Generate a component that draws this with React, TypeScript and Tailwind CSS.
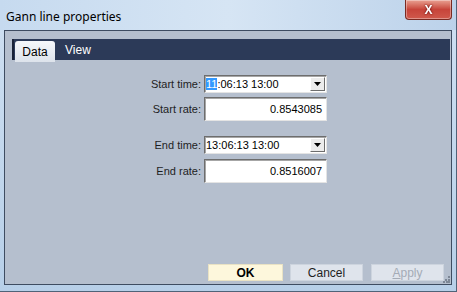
import React from 'react';

const sunken =
  'border border-t-[#6d6d6d] border-l-[#6d6d6d] border-b-[#e4e4e4] border-r-[#e4e4e4] shadow-[inset_1px_1px_0_#a6a6a6]';

const ComboBox: React.FC<{ value: string; highlight?: boolean }> = ({ value, highlight }) => (
  <div className={`h-[18px] w-[123px] bg-white flex items-center ${sunken}`}>
    <div className="flex-1 pl-[1px] text-[11px] leading-[13px] text-black">
      {highlight ? (
        <>
          <span className="bg-[#3399ff] text-white">11</span>
          <span>{value.slice(2)}</span>
        </>
      ) : (
        value
      )}
    </div>
    <div className="w-[15px] h-[14px] mr-[1px] bg-[#ececec] border border-t-white border-l-white border-b-[#6d6d6d] border-r-[#6d6d6d] flex items-center justify-center">
      <svg width="7" height="4" viewBox="0 0 7 4">
        <path d="M0 0h7L3.5 4z" fill="#000" />
      </svg>
    </div>
  </div>
);

const TextBox: React.FC<{ value: string }> = ({ value }) => (
  <div className={`h-[24px] w-[123px] bg-white flex items-center justify-end pr-[4px] text-[11px] text-black ${sunken}`}>
    {value}
  </div>
);

const Row: React.FC<{ label: string; children: React.ReactNode }> = ({ label, children }) => (
  <div className="flex items-center">
    <span className="w-[60px] pr-[3px] text-right text-[11px] text-[#1e1e1e]">{label}</span>
    {children}
  </div>
);

const App: React.FC = () => {
  return (
    <div className="w-[457px] h-[292px] overflow-hidden bg-gradient-to-b from-[#cfe0f2] to-[#b7cfe8] border-r border-b border-[#4f6378] flex flex-col font-['Liberation_Sans',Arial,sans-serif]">
      {/* Title bar */}
      <div className="h-[30px] flex items-start justify-between bg-gradient-to-r from-[#c6daef] via-[#d6e5f4] to-[#bcd2ea]">
        <span className="mt-[8px] ml-[6px] text-[12px] text-black font-['Noto_Sans',sans-serif]">Gann line properties</span>
        <div className="mr-[4px] w-[47px] h-[20px] rounded-b-[4px] border border-t-0 border-[#7a2a22] bg-gradient-to-b from-[#e8a092] via-[#c7443a] to-[#d0594c] flex items-center justify-center shadow-[inset_0_0_0_1px_rgba(255,255,255,0.35)]">
          <span className="text-white font-bold text-[12px] leading-none font-['Liberation_Sans',sans-serif] drop-shadow-[0_0_1px_#5a0000]">X</span>
        </div>
      </div>

      {/* Client area */}
      <div className="mx-[4px] h-[255px] border border-[#3e4c61] bg-[#b5bfce] flex flex-col">
        {/* Tabs */}
        <div className="mt-[8px] ml-[7px] mr-[1px] h-[21px] bg-[#2c3a58] border-l-2 border-[#1a2338] flex items-end">
          <div className="ml-[1px] w-[40px] h-[21px] -mb-[2px] rounded-t-[3px] bg-gradient-to-b from-[#f6f8fb] to-[#dde3eb] flex items-center justify-center text-[12px] text-black">
            Data
          </div>
          <div className="ml-[10px] self-center text-[12px] text-white">View</div>
        </div>

        {/* Form */}
        <div className="flex-1 flex flex-col pl-[139px] pt-[15px]">
          <Row label="Start time:">
            <ComboBox value="11:06:13 13:00" highlight />
          </Row>
          <div className="mt-[4px]">
            <Row label="Start rate:">
              <TextBox value="0.8543085" />
            </Row>
          </div>
          <div className="mt-[15px]">
            <Row label="End time:">
              <ComboBox value="13:06:13 13:00" />
            </Row>
          </div>
          <div className="mt-[5px]">
            <Row label="End rate:">
              <TextBox value="0.8516007" />
            </Row>
          </div>
        </div>

        {/* Buttons */}
        <div className="relative flex items-end justify-end pr-[7px] pb-[3px]">
          <button className="w-[75px] h-[17px] bg-[#fdf7dc] border border-[#e9e2c4] text-[12px] font-bold text-black leading-none">
            OK
          </button>
          <button className="ml-[7px] w-[73px] h-[17px] bg-[#dfe4ec] border border-[#cdd4de] text-[12px] text-[#1e1e1e] leading-none">
            Cancel
          </button>
          <button className="ml-[8px] w-[73px] h-[17px] bg-[#dfe4ec] border border-[#cdd4de] text-[12px] text-[#a4abb6] leading-none">
            <span className="underline">A</span>pply
          </button>
          <svg width="7" height="7" viewBox="0 0 7 7" className="absolute right-[1px] bottom-[1px]">
            <g fill="#7d8796">
              <rect x="5" y="0" width="2" height="2" />
              <rect x="2" y="3" width="2" height="2" />
              <rect x="5" y="3" width="2" height="2" />
              <rect x="0" y="5" width="2" height="2" />
              <rect x="3" y="5" width="2" height="2" />
              <rect x="5" y="5" width="2" height="2" />
            </g>
          </svg>
        </div>
      </div>
    </div>
  );
};

export default App;
